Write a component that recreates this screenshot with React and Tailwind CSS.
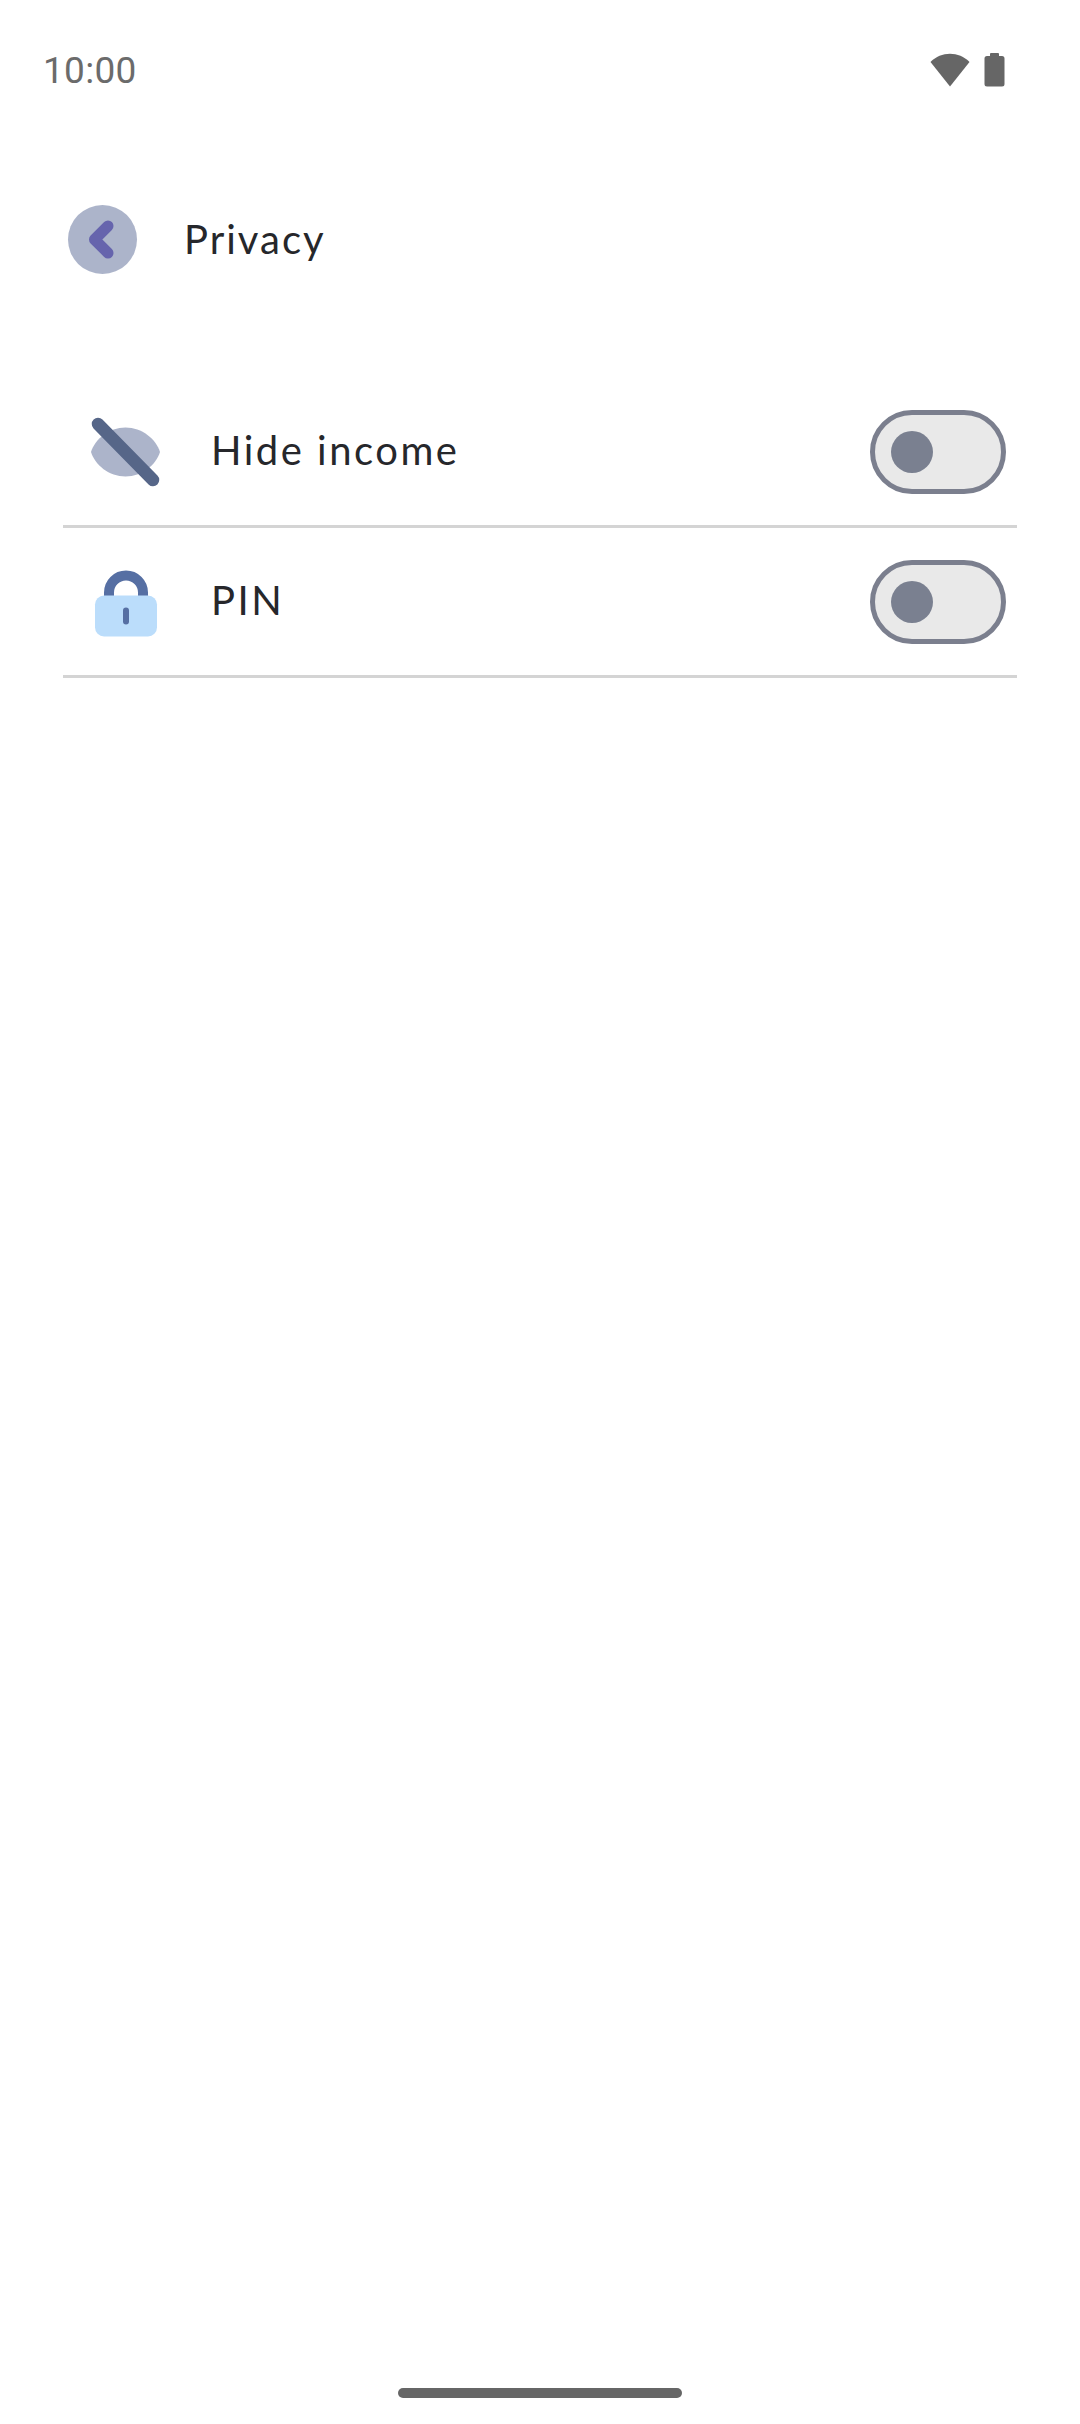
const nunitoLike = { fontFamily: '"Lato", "Open Sans", sans-serif' };

function Toggle() {
  return (
    <div className="flex h-[84px] w-[136px] items-center rounded-full border-[5px] border-[#7b7f8e] bg-[#e9e9e9] pl-[16px]">
      <div className="h-[42px] w-[42px] rounded-full bg-[#7a8090]" />
    </div>
  );
}

function EyeOffIcon() {
  return (
    <svg width="80" height="80" viewBox="0 0 80 80" fill="none">
      <path d="M6 40 C10 27 24 15.5 40.5 15.5 C57 15.5 71 27 75 40 C71 53 57 64.5 40.5 64.5 C24 64.5 10 53 6 40 Z" fill="#acb4ca" />
      <path d="M13 12 L68 68" stroke="#566688" strokeWidth="12.5" strokeLinecap="round" />
    </svg>
  );
}

function LockIcon() {
  return (
    <svg width="80" height="80" viewBox="0 0 80 80" fill="none">
      <path d="M24 38 V30.5 A17 17 0 0 1 58 30.5 V38" stroke="#566fa3" strokeWidth="10" />
      <rect x="10" y="33.5" width="62" height="41" rx="9" fill="#bbddfb" />
      <rect x="38" y="45.5" width="6" height="17" rx="3" fill="#566fa3" />
    </svg>
  );
}

function Row({ icon, label }) {
  return (
    <div className="flex h-[150px] items-center border-b-[3px] border-[#d4d4d4] pl-[22px] pr-[11px]">
      {icon}
      <span className="ml-[46px] flex-1 pb-[3px] text-[40px] tracking-[2.5px] text-[#26272b]" style={nunitoLike}>
        {label}
      </span>
      <Toggle />
    </div>
  );
}

export default function App() {
  return (
    <div className="flex h-[2424px] w-[1080px] flex-col bg-white">
      {/* status bar */}
      <div className="flex h-[140px] items-center justify-between pl-[43px] pr-[75px]">
        <span className="pt-[2px] text-[37px] tracking-[0.3px] text-[#6b6b6b]" style={{ fontFamily: "Roboto, sans-serif" }}>
          10:00
        </span>
        <div className="flex items-center gap-[14px]">
          <svg width="40" height="34" viewBox="0 0 40 34">
            <path d="M0.5 9 C11 -2 29 -2 39.5 9 L20 33.5 Z" fill="#666666" />
          </svg>
          <svg width="21" height="34" viewBox="0 0 21 34">
            <path d="M6 3 V1 Q6 0 7 0 H14 Q15 0 15 1 V3 H18 Q20.5 3 20.5 5.5 V31 Q20.5 33.5 18 33.5 H3 Q0.5 33.5 0.5 31 V5.5 Q0.5 3 3 3 Z" fill="#666666" />
          </svg>
        </div>
      </div>

      {/* header */}
      <div className="mt-[65px] flex items-center pl-[68px]">
        <div className="h-[69px] w-[69px] rounded-full bg-[#acb4ca]">
          <svg width="69" height="69" viewBox="0 0 69 69" fill="none">
            <path d="M40 21 L26.5 34.5 L40 48" stroke="#6664ad" strokeWidth="11" strokeLinecap="round" strokeLinejoin="round" />
          </svg>
        </div>
        <span className="ml-[47px] pb-[2px] text-[40px] tracking-[2px] text-[#26272b]" style={nunitoLike}>
          Privacy
        </span>
      </div>

      {/* settings */}
      <div className="mx-[63px] mt-[104px] w-[954px]">
        <Row icon={<EyeOffIcon />} label="Hide income" />
        <Row icon={<LockIcon />} label="PIN" />
      </div>

      {/* home indicator */}
      <div className="mt-auto mb-[26px] flex justify-center">
        <div className="h-[10px] w-[284px] rounded-full bg-[#666666]" />
      </div>
    </div>
  );
}
